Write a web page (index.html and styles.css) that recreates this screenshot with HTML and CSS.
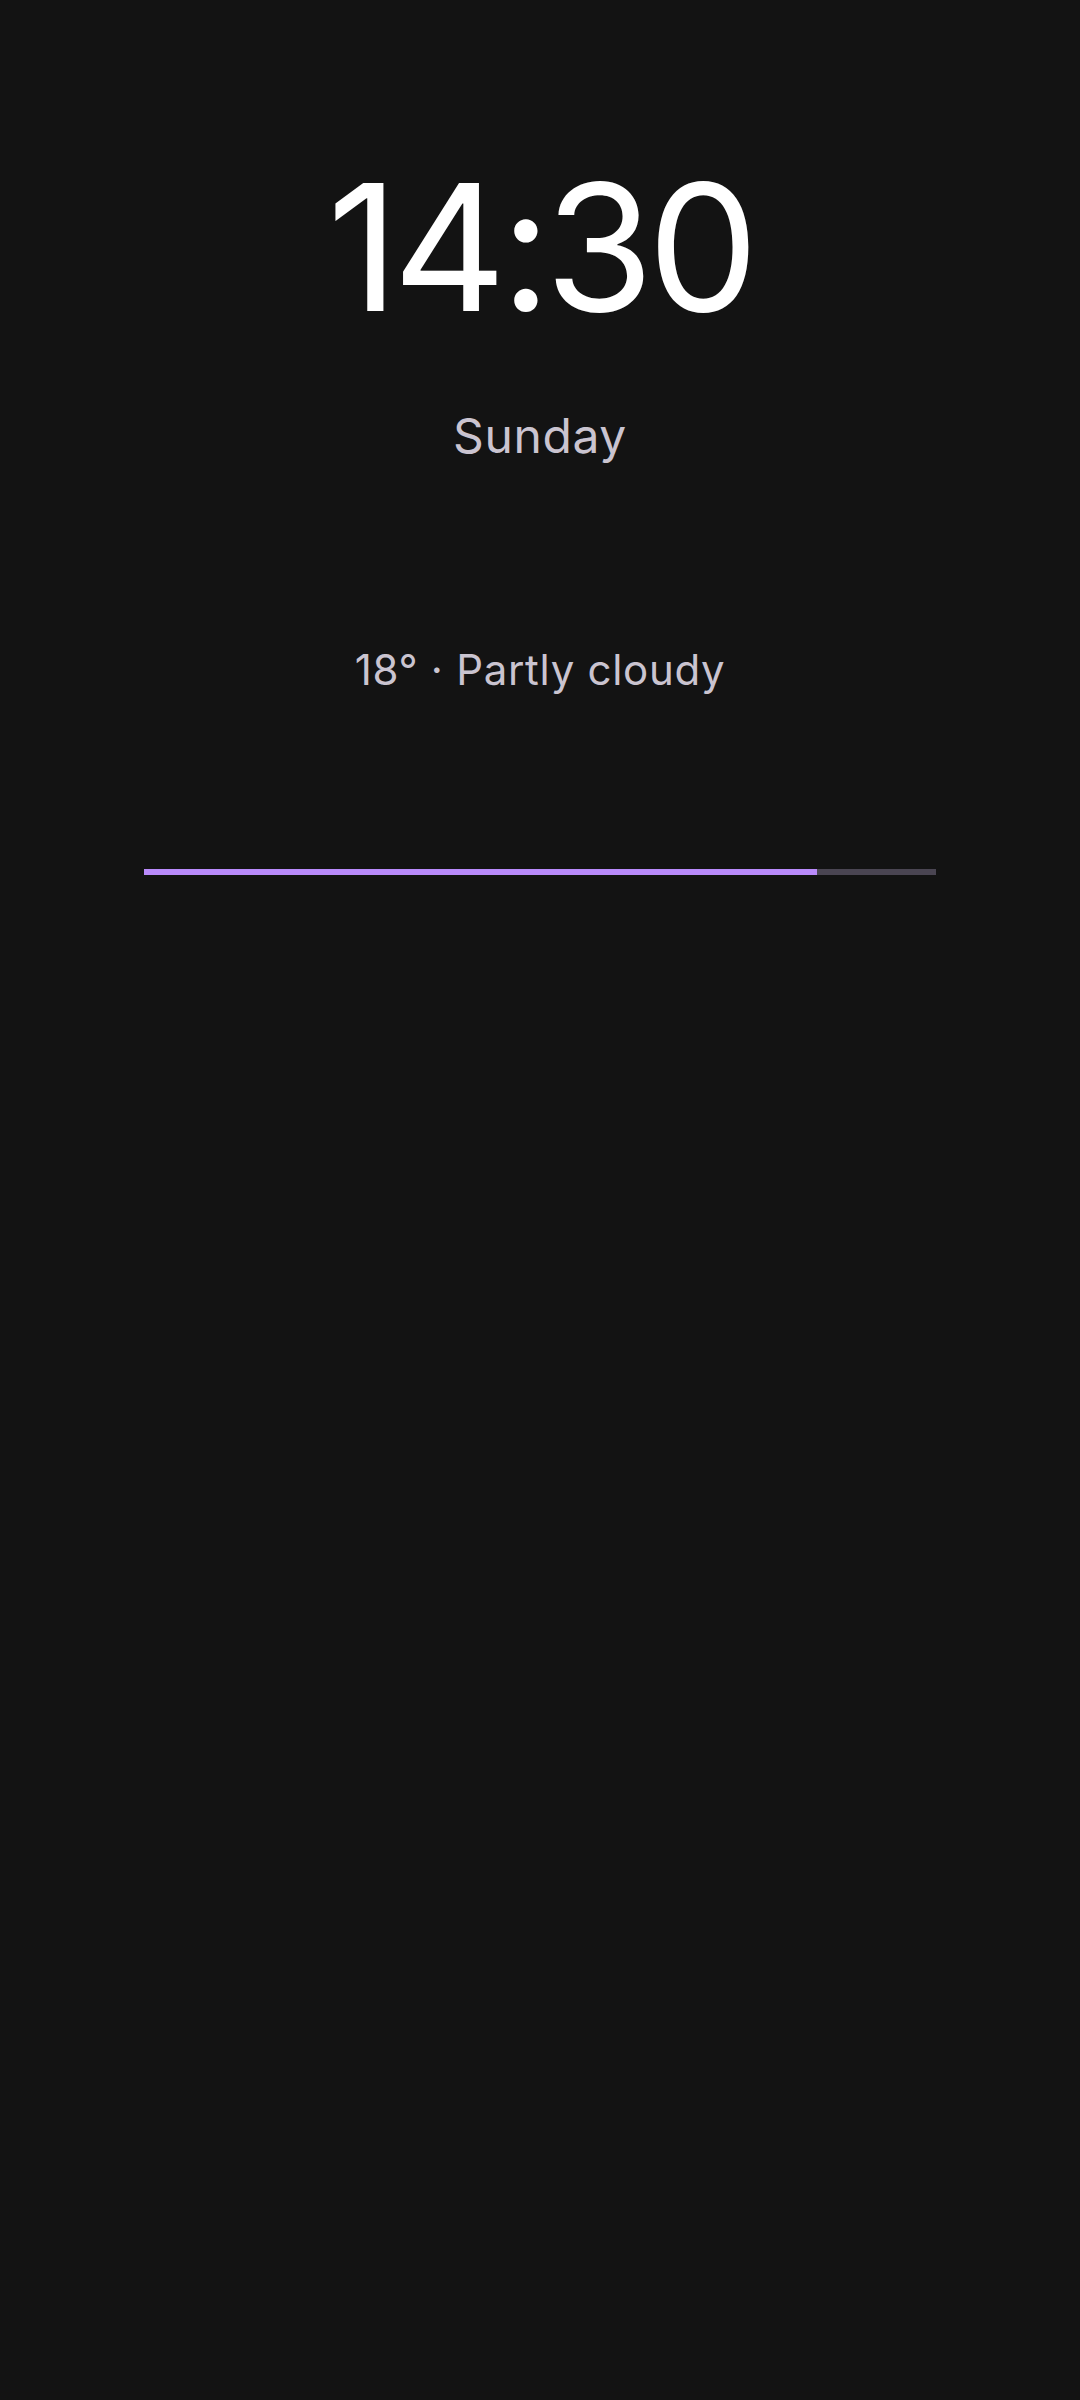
FILE: index.html
```html
<!DOCTYPE html>
<html lang="en">
<head>
    <meta charset="UTF-8">
    <meta name="viewport" content="width=device-width, initial-scale=1.0">
    <title>Clock</title>
    <link rel="stylesheet" href="styles.css">
</head>
<body>
    <main class="clock-screen">
        <div class="time">14:30</div>
        <div class="day">Sunday</div>
        <div class="weather">18° · Partly cloudy</div>
        <div class="progress">
            <div class="progress-fill" style="width: 85%"></div>
        </div>
    </main>
</body>
</html>
```

FILE: styles.css
```css
body {
    margin: 0;
    padding: 0;
    background-color: #131313;
    font-family: 'Inter', 'Roboto', sans-serif;
    height: 2400px;
}

.clock-screen {
    display: flex;
    flex-direction: column;
    align-items: center;
    padding-top: 140px;
}

.time {
    font-size: 176px;
    font-weight: 400;
    line-height: 214px;
    letter-spacing: -6px;
    color: #ffffff;
}

.day {
    margin-top: 52px;
    font-size: 48px;
    line-height: 60px;
    letter-spacing: 0.6px;
    color: #cac4d0;
}

.weather {
    margin-top: 178px;
    font-size: 42px;
    line-height: 52px;
    letter-spacing: 0.7px;
    color: #cac4d0;
}

.progress {
    margin-top: 173px;
    width: 792px;
    height: 6px;
    background: #4a4552;
}

.progress-fill {
    height: 100%;
    background: #b98afa;
}
```
